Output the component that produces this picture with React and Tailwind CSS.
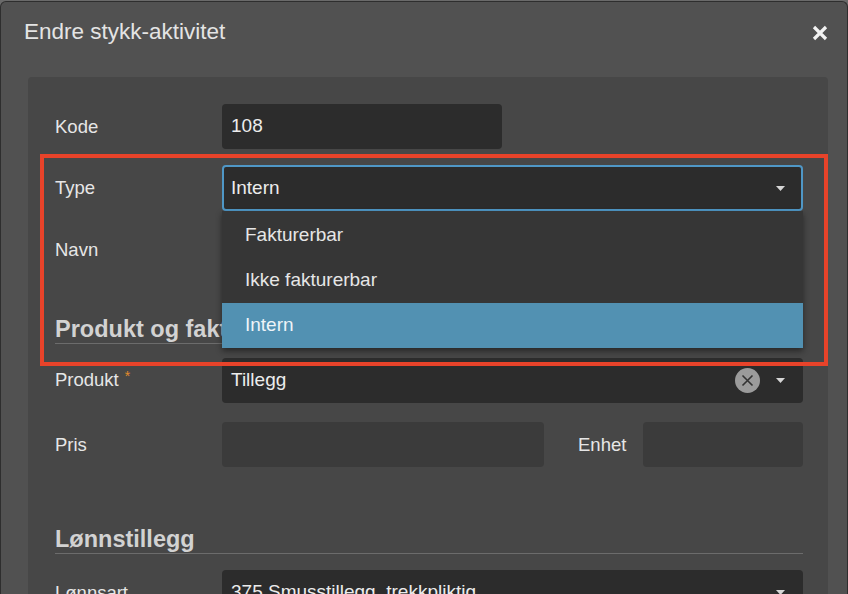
import React from "react";

const font = { fontFamily: '"Liberation Sans", Arial, Helvetica, sans-serif' };

function Caret() {
  return (
    <svg width="9" height="5" viewBox="0 0 9 5" className="shrink-0">
      <path d="M0 0 L9 0 L4.5 5 Z" fill="#d6d6d6" />
    </svg>
  );
}

function Label({ children }) {
  return (
    <div className="w-[167px] shrink-0 text-[18.5px] leading-[22px] text-[#e6e6e6]">
      {children}
    </div>
  );
}

function Heading({ children, className = "" }) {
  return (
    <div
      className={
        "h-[29px] border-b border-[#6c6c6c] text-[23.5px] leading-[28px] font-bold text-[#d2d2d2] " +
        className
      }
    >
      {children}
    </div>
  );
}

export default function App() {
  return (
    <div
      className="relative h-[594px] w-[848px] overflow-hidden bg-[#6a6a6a]"
      style={font}
    >
      <div className="relative mt-[1px] flex h-[600px] w-[848px] flex-col rounded-t-[6px] border-l border-t border-r border-[#2e2e2e] bg-[#515151]">
        {/* header */}
        <div className="flex h-[75px] shrink-0 items-start justify-between pl-[23px] pr-[19px] pt-[16px]">
          <div className="text-[22.5px] leading-[28px] text-[#e4e4e4]">
            Endre stykk-aktivitet
          </div>
          <svg width="16" height="16" viewBox="0 0 16 16" className="mt-[7px]">
            <path
              d="M2 2 L14 14 M14 2 L2 14"
              stroke="#f2f2f2"
              strokeWidth="3.2"
              strokeLinecap="butt"
            />
          </svg>
        </div>

        {/* panel */}
        <div className="ml-[27px] mr-[19px] flex-1 rounded-[4px] bg-[#474747] pl-[27px] pr-[25px] pt-[27px]">
          {/* Kode */}
          <div className="flex h-[45px] items-center">
            <Label>Kode</Label>
            <div className="flex h-[45px] w-[280px] items-center rounded-[4px] bg-[#2c2c2c] pl-[9px] text-[19px] text-[#ececec]">
              108
            </div>
          </div>

          {/* Type */}
          <div className="mt-[16px] flex h-[46px] items-center">
            <Label>Type</Label>
            <div className="relative flex-1">
              <div className="flex h-[46px] items-center justify-between rounded-[4px] border-2 border-[#4f97c6] bg-[#2c2c2c] pl-[7px] pr-[16px] text-[19px] text-[#ececec]">
                <span>Intern</span>
                <Caret />
              </div>
              <div className="absolute left-0 right-0 top-full z-20 bg-[#363636] pt-[2px] shadow-[0_3px_6px_rgba(0,0,0,0.45)]">
                <div className="flex h-[45px] items-center pl-[23px] text-[19px] text-[#e6e6e6]">
                  Fakturerbar
                </div>
                <div className="flex h-[45px] items-center pl-[23px] text-[19px] text-[#e6e6e6]">
                  Ikke fakturerbar
                </div>
                <div className="flex h-[45px] items-center bg-[#5291b2] pl-[23px] text-[19px] text-[#eef4f8]">
                  Intern
                </div>
              </div>
            </div>
          </div>

          {/* Navn */}
          <div className="mt-[16px] flex h-[45px] items-center">
            <Label>Navn</Label>
            <div className="h-[45px] flex-1 rounded-[4px] bg-[#2c2c2c]" />
          </div>

          <Heading className="mt-[43px]">Produkt og fakturering</Heading>

          {/* Produkt */}
          <div className="mt-[14px] flex h-[45px] items-center">
            <Label>
              Produkt
              <span className="relative top-[-5px] ml-[6px] text-[14px] text-[#e38b2c]">*</span>
            </Label>
            <div className="flex h-[45px] flex-1 items-center rounded-[4px] bg-[#2c2c2c] pl-[9px] pr-[18px] text-[19px] text-[#ececec]">
              <span className="flex-1">Tillegg</span>
              <div className="mr-[16px] flex h-[25px] w-[25px] items-center justify-center rounded-full bg-[#9b9b9b]">
                <svg width="13" height="13" viewBox="0 0 13 13">
                  <path d="M1.5 1.5 L11.5 11.5 M11.5 1.5 L1.5 11.5" stroke="#333" strokeWidth="1.6" />
                </svg>
              </div>
              <Caret />
            </div>
          </div>

          {/* Pris / Enhet */}
          <div className="mt-[19px] flex h-[45px] items-center">
            <Label>Pris</Label>
            <div className="h-[45px] w-[322px] rounded-[4px] bg-[#3b3b3b]" />
            <div className="ml-[34px] w-[65px] text-[18.5px] text-[#e6e6e6]">Enhet</div>
            <div className="h-[45px] flex-1 rounded-[4px] bg-[#3b3b3b]" />
          </div>

          <Heading className="mt-[58px]">Lønnstillegg</Heading>

          {/* Lønnsart */}
          <div className="mt-[16px] flex h-[45px] items-center">
            <Label>Lønnsart</Label>
            <div className="flex h-[45px] flex-1 items-center justify-between rounded-[4px] bg-[#2c2c2c] pl-[9px] pr-[18px] text-[19px] text-[#ececec]">
              <span>375 Smusstillegg, trekkpliktig</span>
              <Caret />
            </div>
          </div>
        </div>
      </div>

      {/* annotation box */}
      <div className="pointer-events-none absolute left-[40px] top-[154px] z-30 h-[212px] w-[788px] border-4 border-[#e8432a]" />
    </div>
  );
}
